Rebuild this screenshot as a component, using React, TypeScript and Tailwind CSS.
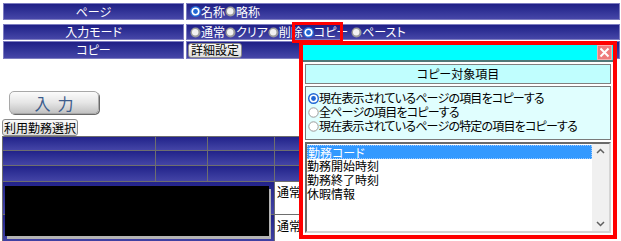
import React from 'react';

const jp = "font-['Noto_Sans_CJK_JP',sans-serif] [font-feature-settings:'palt']";

const Radio = ({ checked, dark }: { checked?: boolean; dark?: boolean }) => (
  <svg width="11" height="11" viewBox="0 0 11 11" className="shrink-0">
    {checked ? (
      <>
        <circle cx="5.5" cy="5.5" r="4.8" fill="#fff" stroke="#1f66d4" strokeWidth="1.4" />
        <circle cx="5.5" cy="5.5" r="2.4" fill="#1f66d4" />
      </>
    ) : dark ? (
      <>
        <circle cx="5.5" cy="5.5" r="5" fill="#9c9c9c" />
        <circle cx="5.2" cy="5.2" r="3.2" fill="#f2f2f2" />
      </>
    ) : (
      <circle cx="5.5" cy="5.5" r="4.7" fill="#fff" stroke="#9a9a9a" />
    )}
  </svg>
);

const Option = ({ label, checked, dark }: { label: string; checked?: boolean; dark?: boolean }) => (
  <span className="flex items-center">
    <Radio checked={checked} dark={dark} />
    <span>{label}</span>
  </span>
);

const labelCell =
  'flex items-center justify-center border border-[#7c7cc0] bg-linear-to-b from-[#1f1f86] to-[#4646a8] text-white';
const valueCell = 'flex items-center border border-[#7c7cc0] bg-linear-to-b from-[#1f1f86] to-[#4646a8] text-white';
const gridCell = 'border-r border-b border-[#6e6e6e] bg-linear-to-b from-[#22228a] to-[#4444a6]';

const HeaderRow = ({ h }: { h: string }) => (
  <div className={`flex ${h}`}>
    <div className={`${gridCell} w-[154px] border-l`} />
    <div className={`${gridCell} w-[52px]`} />
    <div className={`${gridCell} w-[67px]`} />
    <div className={`${gridCell} w-[24px] border-r-0`} />
  </div>
);

const App = () => {
  return (
    <div className={`relative w-[621px] h-[241px] overflow-hidden bg-white text-[12px] leading-none ${jp}`}>
      {/* settings rows */}
      <div className="ml-[3px] mt-[3px] flex gap-[2px] h-[17px]">
        <div className={`${labelCell} w-[181px]`}>ページ</div>
        <div className={`${valueCell} w-[434px] pl-[3px]`}>
          <Option label="名称" checked />
          <Option label="略称" dark />
        </div>
      </div>
      <div className="ml-[3px] mt-[4px] flex gap-[2px] h-[16px]">
        <div className={`${labelCell} w-[181px]`}>入力モード</div>
        <div className={`${valueCell} w-[434px] pl-[3px]`}>
          <Option label="通常" dark />
          <Option label="クリア" dark />
          <Option label="削除" dark />
          <Option label="コピー" checked />
          <span className="ml-[3px]">
            <Option label="ペースト" dark />
          </span>
        </div>
      </div>
      <div className="ml-[3px] mt-[1px] flex gap-[2px] h-[18px]">
        <div className={`${labelCell} w-[181px]`}>コピー</div>
        <div className={`${valueCell} w-[434px] pl-[1px]`}>
          <button className="h-[15px] px-[2px] rounded-[3px] border border-[#8a8a8a] bg-linear-to-b from-[#fafafa] to-[#dcdcdc] text-black">
            詳細設定
          </button>
        </div>
      </div>

      {/* input button */}
      <button className="mt-[32px] ml-[9px] flex h-[23px] w-[90px] items-center justify-center rounded-[5px] border border-[#a8a8a8] bg-linear-to-b from-[#fbfbfb] via-[#e6e6e6] to-[#c2c2c2] text-[16px] tracking-[7px] pl-[7px] text-[#3d5c8c] shadow-[1px_1px_0_#6a6a6a]">
        入力
      </button>
      <button className="mt-[5px] ml-[2px] flex h-[17px] items-center px-[1px] rounded-[3px] border border-[#8c8c8c] bg-linear-to-b from-[#fafafa] to-[#dedede] text-black">
        利用勤務選択
      </button>

      {/* work grid */}
      <div className="ml-[2px] border-t border-[#6e6e6e] w-[297px]">
        <HeaderRow h="h-[14px]" />
        <HeaderRow h="h-[15px]" />
        <HeaderRow h="h-[16px]" />
        <div className="flex h-[33px]">
          <div className={`${gridCell} w-[273px] border-l`} />
          <div className="w-[24px] overflow-hidden whitespace-nowrap border-b border-[#6e6e6e] bg-white pl-[2px] pt-[4px] text-black">通常</div>
        </div>
        <div className="flex h-[30px]">
          <div className={`${gridCell} w-[273px] border-l`} />
          <div className="w-[24px] overflow-hidden whitespace-nowrap border-b border-[#6e6e6e] bg-white pl-[2px] pt-[5px] text-black">通常</div>
        </div>
      </div>

      {/* redaction */}
      <div className="absolute left-[5px] top-[186px] h-[50px] w-[264px] bg-black shadow-[2px_3px_0_#b4b4b4]" />

      {/* highlight around copy option */}
      <div className="absolute left-[292px] top-[22px] h-[21px] w-[51px] border-[3px] border-[#ff0000]" />

      {/* copy dialog */}
      <div className="absolute left-[299px] top-[41px] flex h-[198px] w-[318px] flex-col border-[4px] border-[#ff0000] bg-white">
        <div className="flex h-[17px] shrink-0 items-start justify-end border-b-2 border-[#4f7878] bg-[#00ffff] pr-[1px]">
          <svg width="15" height="15" viewBox="0 0 15 15">
            <rect x="0.5" y="0.5" width="14" height="14" fill="#ee7c7c" stroke="#f7b0b0" />
            <path d="M3.5 3.5 L11.5 11.5 M11.5 3.5 L3.5 11.5" stroke="#fff" strokeWidth="2" />
          </svg>
        </div>
        <div className="flex flex-1 flex-col gap-[2px] px-[2px] pt-[2px]">
          <div className="flex h-[20px] items-center justify-center border border-[#808080] bg-[#c0fefe] text-black">
            コピー対象項目
          </div>
          <div className="flex h-[54px] flex-col gap-[2px] border border-[#7a7a7a] bg-[#e0fefe] pl-[2px] pt-[5px] tracking-[-0.8px] text-black">
            <Option label="現在表示されているページの項目をコピーする" checked />
            <Option label="全ページの項目をコピーする" />
            <Option label="現在表示されているページの特定の項目をコピーする" />
          </div>
          <div className="flex h-[91px] border-2 border-t-[#6a6a6a] border-l-[#6a6a6a] border-r-[#d4d4d4] border-b-[#d4d4d4] bg-white">
            <div className="flex flex-1 flex-col pt-[1px] text-black">
              <div className="h-[14px] border border-dotted border-[#9ccaff] bg-[#3399ff] pt-[1px] text-white">勤務コード</div>
              <div className="h-[14px] pt-[1px]">勤務開始時刻</div>
              <div className="h-[14px] pt-[1px]">勤務終了時刻</div>
              <div className="h-[14px] pt-[1px]">休暇情報</div>
            </div>
            <div className="flex w-[17px] flex-col items-center justify-between bg-[#f0f0f0] py-[4px]">
              <svg width="9" height="6" viewBox="0 0 9 6">
                <path d="M1 5 L4.5 1.5 L8 5" fill="none" stroke="#606060" strokeWidth="1.5" />
              </svg>
              <svg width="9" height="6" viewBox="0 0 9 6">
                <path d="M1 1 L4.5 4.5 L8 1" fill="none" stroke="#606060" strokeWidth="1.5" />
              </svg>
            </div>
          </div>
        </div>
      </div>
    </div>
  );
};

export default App;
